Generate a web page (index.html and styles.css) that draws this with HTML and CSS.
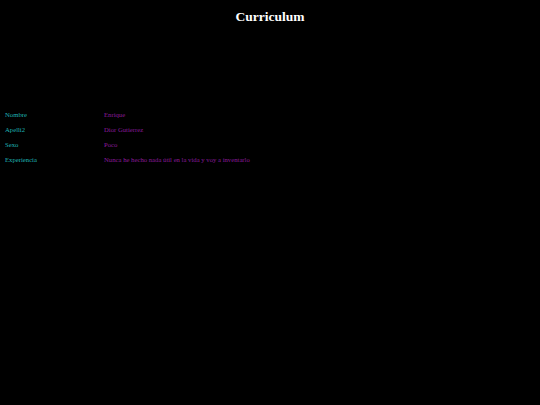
FILE: index.html
```html
<!DOCTYPE html>
<html lang="es">
<head>
<meta charset="utf-8">
<title>Curriculum</title>
<link rel="stylesheet" href="styles.css">
</head>
<body>
<h1 class="title">Curriculum</h1>
<div class="cv">
  <div class="label">Nombre</div><div class="value">Enrique</div>
  <div class="label">Apelli2</div><div class="value">Dior Gutierrez</div>
  <div class="label">Sexo</div><div class="value">Poco</div>
  <div class="label">Experiencia</div><div class="value">Nunca he hecho nada útil en la vida y voy a inventarlo</div>
</div>
</body>
</html>
```
FILE: styles.css
```css
html, body {
  margin: 0;
  padding: 0;
  background: #000;
  height: 100%;
}
body {
  font-family: "Liberation Serif", "Times New Roman", serif;
}
.title {
  margin: 0;
  padding-top: 9px;
  text-align: center;
  color: #fff;
  font-size: 13.5px;
  font-weight: bold;
  line-height: 16px;
}
.cv {
  display: grid;
  grid-template-columns: 99px auto;
  grid-auto-rows: 15px;
  margin-top: 82px;
  padding-left: 5px;
  font-size: 6.7px;
  line-height: 15px;
}
.label {
  color: #1fb5b5;
}
.value {
  color: #8b1a9b;
}
```
